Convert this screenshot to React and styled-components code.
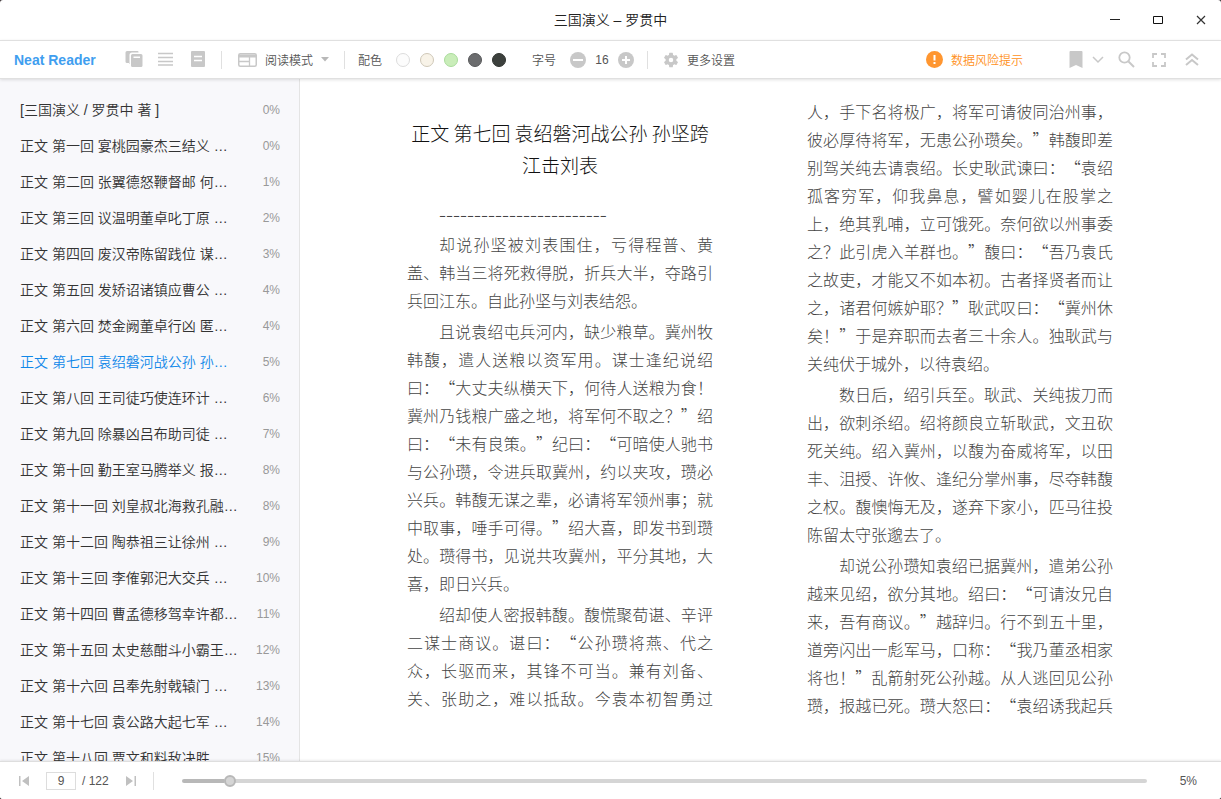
import React, { useState } from 'react';
import styled, { createGlobalStyle } from 'styled-components';

const GlobalStyle = createGlobalStyle`
  * { box-sizing: border-box; }
  html, body, #root { height: 100%; }
  body {
    margin: 0;
    background: #3a3236;
    color: #333;
    font-family: "Liberation Sans", "Noto Sans CJK SC", sans-serif;
    font-size: 12px;
    overflow: hidden;
  }
  button, input { font: inherit; color: inherit; }
`;

const Window = styled.div`
  display: flex;
  flex-direction: column;
  height: 100vh;
  overflow: hidden;
  border-radius: 3px;
  background: #fff;
`;

const TitleBar = styled.header`
  display: grid;
  grid-template-columns: 1fr auto 1fr;
  align-items: center;
  flex: none;
  height: 40px;
  padding: 0 10px;
`;

const Title = styled.h1`
  grid-column: 2;
  margin: 0;
  padding-bottom: 2px;
  color: #222;
  font-size: 14px;
  font-weight: 350;
`;

const WindowButtons = styled.div`
  display: flex;
  justify-content: flex-end;
  gap: 23px;
`;

const IconButton = styled.button`
  display: inline-flex;
  align-items: center;
  justify-content: center;
  flex: none;
  width: 20px;
  height: 20px;
  padding: 0;
  border: 0;
  background: none;
  color: #c8c8c8;
  cursor: pointer;
  svg { display: block; }
`;

const Toolbar = styled.nav`
  position: relative;
  z-index: 2;
  display: flex;
  align-items: center;
  justify-content: space-between;
  flex: none;
  height: 39px;
  padding: 0 19px 0 14px;
  border-top: 1px solid #e0e0e0;
  border-bottom: 1px solid #e0e0e0;
  background: #fff;
  color: #555;
  font-weight: 350;
  box-shadow: 0 1px 3px rgba(0, 0, 0, 0.12);
`;

const ToolGroup = styled.div`
  display: flex;
  align-items: center;
  gap: ${(p) => p.$gap || 0}px;
  margin-left: ${(p) => p.$before || 0}px;
`;

const Shelf = styled(ToolGroup)`
  padding-bottom: 2px;
`;

const Brand = styled.a`
  width: 110px;
  color: #409eef;
  font-size: 14px;
  font-weight: 700;
  text-decoration: none;
`;

const Divider = styled.span`
  flex: none;
  width: 1px;
  height: 18px;
  margin: 0 ${(p) => p.$after || 12}px 0 ${(p) => p.$before || 14}px;
  background: #e0e0e0;
`;

const Label = styled.span`
  padding-bottom: 1px;
`;

const TextButton = styled.button`
  display: flex;
  align-items: center;
  gap: ${(p) => p.$gap || 8}px;
  height: 20px;
  padding: 0;
  border: 0;
  background: none;
  color: ${(p) => p.$color || '#555'};
  white-space: nowrap;
  cursor: pointer;
`;

const Swatch = styled.button`
  width: 14px;
  height: 14px;
  padding: 0;
  border: 1px solid ${(p) => p.$edge};
  border-radius: 50%;
  background: ${(p) => p.$fill};
`;

const FontSize = styled.output`
  width: 16px;
  text-align: center;
`;

const Main = styled.main`
  display: flex;
  flex: 1;
  min-height: 0;
`;

const Sidebar = styled.aside`
  flex: none;
  width: 300px;
  padding: 13px 0 0;
  overflow: hidden;
  border-right: 1px solid #e4e4e4;
  background: #f8f8fb;
`;

const ChapterList = styled.ul`
  margin: 0;
  padding: 0;
  list-style: none;
`;

const ChapterLink = styled.a`
  display: flex;
  align-items: center;
  justify-content: space-between;
  height: 36px;
  padding: 0 19px 0 20px;
  color: ${(p) => (p.$active ? '#1088e9' : '#333')};
  font-size: 14px;
  font-weight: 350;
  text-decoration: none;
  white-space: nowrap;
`;

const ChapterName = styled.span`
  padding-bottom: 2px;
`;

const Percent = styled.span`
  color: #999;
  font-size: 12px;
`;

const Reader = styled.article`
  flex: 1;
  min-width: 0;
  padding: 18px 108px 34px 107px;
`;

const Pages = styled.div`
  height: 100%;
  columns: 2;
  column-gap: 94px;
  column-fill: auto;
  color: #444;
  font-family: "Noto Sans CJK SC", sans-serif;
  font-size: 16px;
  font-weight: 300;
  line-height: 28px;
  text-spacing-trim: space-all;
`;

const ChapterTitle = styled.h2`
  margin: 0;
  padding: 20px 0 18px;
  color: #111;
  font-size: 19px;
  font-weight: 300;
  line-height: 32px;
  text-align: center;
`;

const Paragraph = styled.p`
  margin: 0 0 3px;
  text-align: justify;
  text-align-last: ${(p) => (p.$continues ? 'justify' : 'auto')};
  text-indent: 32px;
  orphans: 1;
  widows: 1;
`;

const Rule = styled(Paragraph)`
  font-size: 21px;
`;

const Footer = styled.footer`
  position: relative;
  z-index: 2;
  display: flex;
  align-items: center;
  flex: none;
  height: 38px;
  padding: 0 24px 0 14px;
  border-top: 1px solid #dedede;
  background: #fff;
  color: #555;
  box-shadow: 0 -1px 2px rgba(0, 0, 0, 0.08);
`;

const PageInput = styled.input`
  width: 30px;
  height: 18px;
  margin: 0 6px 0 12px;
  padding: 0;
  border: 1px solid #ddd;
  background: #fff;
  text-align: center;
`;

const PageTotal = styled.span`
  width: 39px;
  white-space: nowrap;
`;

const Slider = styled.input`
  flex: 1;
  min-width: 0;
  height: 12px;
  margin: 0;
  appearance: none;
  background: none;
  &::-webkit-slider-runnable-track {
    height: 4px;
    border-radius: 2px;
    background: linear-gradient(to right, #b8b8b8 ${(p) => p.$at}%, #d5d5d5 ${(p) => p.$at}%);
  }
  &::-webkit-slider-thumb {
    appearance: none;
    width: 12px;
    height: 12px;
    margin-top: -4px;
    border: 2px solid #b8b8b8;
    border-radius: 50%;
    background: #d5d5d5;
  }
`;

const Progress = styled.span`
  width: 50px;
  text-align: right;
`;

const Minimize = () => (
  <svg width="10" height="10" viewBox="0 0 10 10"><path d="M0 4.5h10" stroke="#222" /></svg>
);
const Maximize = () => (
  <svg width="10" height="8" viewBox="0 0 10 8"><path d="M.5.5h9v7h-9z" fill="none" stroke="#111" /></svg>
);
const Close = () => (
  <svg width="10" height="10" viewBox="0 0 10 10"><path d="M1 1l8 8M9 1L1 9" stroke="#333" strokeWidth="1.200" fill="none" /></svg>
);
const Library = () => (
  <svg width="18" height="16" viewBox="0 0 18 16" fill="currentColor">
    <path d="M2 0h10.500a1 1 0 0 1 1 1v.5H7A2.500 2.500 0 0 0 4.500 4v9H4v-1H2a1.500 1.500 0 0 1-1.500-1.500v-9A1.500 1.500 0 0 1 2 0z" />
    <path fillRule="evenodd" d="M7.500 3h8.500a1.500 1.500 0 0 1 1.500 1.500v10a1.500 1.500 0 0 1-1.500 1.500H7.500A1.500 1.500 0 0 1 6 14.500v-10A1.500 1.500 0 0 1 7.500 3zM8.500 5.500V7h6.500V5.500z" />
  </svg>
);
const Lines = () => (
  <svg width="16" height="14" viewBox="0 0 16 14"><path d="M0 1.500h15M0 5.500h15M0 9.500h15M0 13h15" stroke="currentColor" strokeWidth="1.300" /></svg>
);
const Note = () => (
  <svg width="14" height="16" viewBox="0 0 14 16">
    <rect width="14" height="16" rx="1" fill="currentColor" />
    <path d="M3 5.500h8M3 9.500h8" stroke="#fff" strokeWidth="1.300" />
  </svg>
);
const Layout = () => (
  <svg width="19" height="14" viewBox="0 0 19 14" fill="none" stroke="#c8c8c8">
    <rect x=".75" y=".75" width="17.500" height="12.500" rx="1.500" strokeWidth="1.500" />
    <path d="M1 3h17" strokeWidth="3" /><path d="M11.500 4v9M1 8.500h10" strokeWidth="1.300" />
  </svg>
);
const Caret = () => (
  <svg width="8" height="5" viewBox="0 0 8 5"><path d="M0 0h8L4 4.500z" fill="#b8b8b8" /></svg>
);
const Round = ({ plus }) => (
  <svg width="16" height="16" viewBox="0 0 16 16">
    <circle cx="8" cy="8" r="8" fill="currentColor" />
    <path d={plus ? 'M4 8h8M8 4v8' : 'M3 8h10'} stroke="#fff" strokeWidth="2" />
  </svg>
);
const Gear = () => (
  <svg width="18" height="18" viewBox="0 0 24 24" fill="#c8c8c8">
    <path d="M19.140 12.940a7 7 0 0 0 0-1.880l2.030-1.580a.5.5 0 0 0 .12-.61l-1.920-3.320a.5.5 0 0 0-.59-.22l-2.390.96a7 7 0 0 0-1.620-.94l-.36-2.540a.5.5 0 0 0-.48-.41h-3.840a.5.5 0 0 0-.47.41l-.36 2.540a7 7 0 0 0-1.620.94l-2.390-.96a.5.5 0 0 0-.59.22L2.740 8.870a.5.5 0 0 0 .12.610l2.030 1.580a7 7 0 0 0 0 1.880l-2.030 1.580a.5.5 0 0 0-.12.610l1.920 3.320c.12.220.37.290.59.220l2.390-.96c.5.380 1.030.700 1.620.940l.36 2.540c.05.240.24.410.48.410h3.840c.24 0 .44-.17.470-.41l.36-2.540a7 7 0 0 0 1.620-.94l2.390.96c.22.080.47 0 .59-.22l1.920-3.320a.5.5 0 0 0-.12-.61zM12 15a3 3 0 1 1 0-6 3 3 0 0 1 0 6z" />
  </svg>
);
const Alert = () => (
  <svg width="17" height="17" viewBox="0 0 17 17">
    <circle cx="8.500" cy="8.500" r="8.500" fill="#ff9630" />
    <path d="M8.500 4v5.500M8.500 11v2" stroke="#fff" strokeWidth="2" />
  </svg>
);
const Bookmark = () => (
  <svg width="14" height="17" viewBox="0 0 14 17"><path d="M1.500 0h11A1 1 0 0 1 13.500 1v16L7 14 .5 17V1a1 1 0 0 1 1-1z" fill="currentColor" /></svg>
);
const ChevronDown = () => (
  <svg width="12" height="8" viewBox="0 0 12 8"><path d="M1 1l5 5 5-5" fill="none" stroke="currentColor" strokeWidth="1.500" /></svg>
);
const Search = () => (
  <svg width="17" height="17" viewBox="0 0 17 17" fill="none" stroke="currentColor">
    <circle cx="6.500" cy="6.500" r="5.200" strokeWidth="1.800" /><path d="M10.500 10.500l5.500 5.500" strokeWidth="2" />
  </svg>
);
const Fullscreen = () => (
  <svg width="14" height="14" viewBox="0 0 14 14"><path d="M1 5V1h4M9 1h4v4M13 9v4H9M5 13H1V9" fill="none" stroke="currentColor" strokeWidth="1.800" /></svg>
);
const Collapse = () => (
  <svg width="14" height="13" viewBox="0 0 14 13"><path d="M1 6.500l6-5 6 5M1 12l6-5 6 5" fill="none" stroke="currentColor" strokeWidth="2" /></svg>
);
const Step = ({ next }) => (
  <svg width="10" height="10" viewBox="0 0 10 10" fill="#c0c0c0">
    <path d={next ? 'M0 0l7 5-7 5zM8.500 0H10v10H8.500z' : 'M10 0L3 5l7 5zM0 0h1.500v10H0z'} />
  </svg>
);

const swatches = [
  { name: '白色', fill: '#fcfcfc', edge: '#dcdcdc' },
  { name: '米色', fill: '#f8f3e8', edge: '#cfc8b8' },
  { name: '绿色', fill: '#c9edb9', edge: '#aadc9c' },
  { name: '灰色', fill: '#6b6c6e', edge: '#57585a' },
  { name: '黑色', fill: '#3c403d', edge: '#303431' },
];

const chapters = [
  ['[三国演义 / 罗贯中 著 ]', 0],
  ['正文 第一回 宴桃园豪杰三结义 …', 0],
  ['正文 第二回 张翼德怒鞭督邮 何…', 1],
  ['正文 第三回 议温明董卓叱丁原 …', 2],
  ['正文 第四回 废汉帝陈留践位 谋…', 3],
  ['正文 第五回 发矫诏诸镇应曹公 …', 4],
  ['正文 第六回 焚金阙董卓行凶 匿…', 4],
  ['正文 第七回 袁绍磐河战公孙 孙…', 5],
  ['正文 第八回 王司徒巧使连环计 …', 6],
  ['正文 第九回 除暴凶吕布助司徒 …', 7],
  ['正文 第十回 勤王室马腾举义 报…', 8],
  ['正文 第十一回 刘皇叔北海救孔融…', 8],
  ['正文 第十二回 陶恭祖三让徐州 …', 9],
  ['正文 第十三回 李傕郭汜大交兵 …', 10],
  ['正文 第十四回 曹孟德移驾幸许都…', 11],
  ['正文 第十五回 太史慈酣斗小霸王…', 12],
  ['正文 第十六回 吕奉先射戟辕门 …', 13],
  ['正文 第十七回 袁公路大起七军 …', 14],
  ['正文 第十八回 贾文和料敌决胜 …', 15],
];

const paragraphs = [
  '却说孙坚被刘表围住，亏得程普、黄盖、韩当三将死救得脱，折兵大半，夺路引兵回江东。自此孙坚与刘表结怨。',
  '且说袁绍屯兵河内，缺少粮草。冀州牧韩馥，遣人送粮以资军用。谋士逢纪说绍曰：“大丈夫纵横天下，何待人送粮为食！冀州乃钱粮广盛之地，将军何不取之？”绍曰：“未有良策。”纪曰：“可暗使人驰书与公孙瓒，令进兵取冀州，约以夹攻，瓒必兴兵。韩馥无谋之辈，必请将军领州事；就中取事，唾手可得。”绍大喜，即发书到瓒处。瓒得书，见说共攻冀州，平分其地，大喜，即日兴兵。',
  '绍却使人密报韩馥。馥慌聚荀谌、辛评二谋士商议。谌曰：“公孙瓒将燕、代之众，长驱而来，其锋不可当。兼有刘备、关、张助之，难以抵敌。今袁本初智勇过人，手下名将极广，将军可请彼同治州事，彼必厚待将军，无患公孙瓒矣。”韩馥即差别驾关纯去请袁绍。长史耿武谏曰：“袁绍孤客穷军，仰我鼻息，譬如婴儿在股掌之上，绝其乳哺，立可饿死。奈何欲以州事委之？此引虎入羊群也。”馥曰：“吾乃袁氏之故吏，才能又不如本初。古者择贤者而让之，诸君何嫉妒耶？”耿武叹曰：“冀州休矣！”于是弃职而去者三十余人。独耿武与关纯伏于城外，以待袁绍。',
  '数日后，绍引兵至。耿武、关纯拔刀而出，欲刺杀绍。绍将颜良立斩耿武，文丑砍死关纯。绍入冀州，以馥为奋威将军，以田丰、沮授、许攸、逢纪分掌州事，尽夺韩馥之权。馥懊悔无及，遂弃下家小，匹马往投陈留太守张邈去了。',
  '却说公孙瓒知袁绍已据冀州，遣弟公孙越来见绍，欲分其地。绍曰：“可请汝兄自来，吾有商议。”越辞归。行不到五十里，道旁闪出一彪军马，口称：“我乃董丞相家将也！”乱箭射死公孙越。从人逃回见公孙瓒，报越已死。瓒大怒曰：“袁绍诱我起兵',
];

export default function App() {
  const [position, setPosition] = useState(4.4);
  const [page, setPage] = useState('9');
  const [size, setSize] = useState(16);

  return (
    <Window lang="zh-CN">
      <GlobalStyle />
      <TitleBar>
        <Title>三国演义 – 罗贯中</Title>
        <WindowButtons>
          <IconButton aria-label="最小化"><Minimize /></IconButton>
          <IconButton aria-label="最大化"><Maximize /></IconButton>
          <IconButton aria-label="关闭"><Close /></IconButton>
        </WindowButtons>
      </TitleBar>

      <Toolbar>
        <ToolGroup>
          <Brand href="#home">Neat Reader</Brand>
          <Shelf $gap={12}>
            <IconButton aria-label="书架"><Library /></IconButton>
            <IconButton aria-label="目录"><Lines /></IconButton>
            <IconButton aria-label="笔记"><Note /></IconButton>
          </Shelf>
          <Divider $before={13} $after={16} />
          <TextButton><Layout /><Label>阅读模式</Label><Caret /></TextButton>
          <Divider $before={15} $after={13} />
          <Label>配色</Label>
          <ToolGroup $gap={10} $before={14}>
            {swatches.map((s) => <Swatch key={s.name} aria-label={s.name} $fill={s.fill} $edge={s.edge} />)}
          </ToolGroup>
          <ToolGroup $before={26} $gap={12}>
            <Label>字号</Label>
            <ToolGroup $gap={6}>
              <IconButton aria-label="减小字号" onClick={() => setSize(size - 1)}><Round /></IconButton>
              <FontSize>{size}</FontSize>
              <IconButton aria-label="增大字号" onClick={() => setSize(size + 1)}><Round plus /></IconButton>
            </ToolGroup>
          </ToolGroup>
          <Divider $before={11} $after={14} />
          <TextButton $gap={7}><Gear /><Label>更多设置</Label></TextButton>
        </ToolGroup>
        <ToolGroup>
          <TextButton $color="#ff9020"><Alert /><Label>数据风险提示</Label></TextButton>
          <ToolGroup $before={43} $gap={2}>
            <IconButton aria-label="书签"><Bookmark /></IconButton>
            <IconButton aria-label="书签列表"><ChevronDown /></IconButton>
          </ToolGroup>
          <ToolGroup $before={8} $gap={13}>
            <IconButton aria-label="搜索"><Search /></IconButton>
            <IconButton aria-label="全屏"><Fullscreen /></IconButton>
            <IconButton aria-label="收起"><Collapse /></IconButton>
          </ToolGroup>
        </ToolGroup>
      </Toolbar>

      <Main>
        <Sidebar>
          <ChapterList>
            {chapters.map(([name, percent], i) => (
              <li key={name}>
                <ChapterLink href={`#chapter-${i}`} $active={i === 7}>
                  <ChapterName>{name}</ChapterName>
                  <Percent>{percent}%</Percent>
                </ChapterLink>
              </li>
            ))}
          </ChapterList>
        </Sidebar>
        <Reader>
          <Pages>
            <ChapterTitle>正文 第七回 袁绍磐河战公孙 孙坚跨江击刘表</ChapterTitle>
            <Rule>------------------------</Rule>
            {paragraphs.map((text, i) => (
              <Paragraph key={i} $continues={i === paragraphs.length - 1}>{text}</Paragraph>
            ))}
          </Pages>
        </Reader>
      </Main>

      <Footer>
        <IconButton aria-label="上一页"><Step /></IconButton>
        <PageInput aria-label="页码" value={page} onChange={(e) => setPage(e.target.value)} />
        <PageTotal>/ 122</PageTotal>
        <IconButton aria-label="下一页"><Step next /></IconButton>
        <Divider $before={12} $after={28} />
        <Slider type="range" aria-label="阅读进度" min="0" max="100" step="0.1" value={position} $at={position} onChange={(e) => setPosition(Number(e.target.value))} />
        <Progress>{Math.ceil(position)}%</Progress>
      </Footer>
    </Window>
  );
}
